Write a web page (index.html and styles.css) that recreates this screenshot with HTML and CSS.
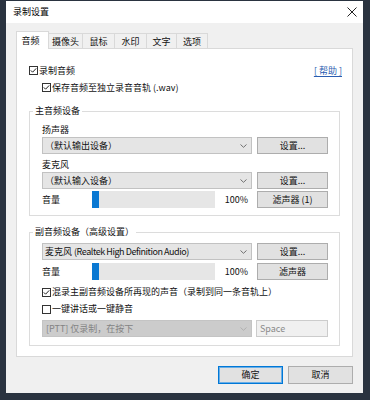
FILE: index.html
```html
<!DOCTYPE html>
<html lang="zh-CN">
<head>
<meta charset="utf-8">
<title>录制设置</title>
<link rel="stylesheet" href="styles.css">
</head>
<body>
<div class="window">
  <div class="titlebar">
    <span class="title">录制设置</span>
    <svg class="close" width="10" height="10" viewBox="0 0 10 10"><path d="M0.5 0.5 L9.5 9.5 M9.5 0.5 L0.5 9.5" stroke="#222" stroke-width="1" fill="none"/></svg>
  </div>
  <div class="body">
    <div class="tabs">
      <div class="tab active">音频</div>
      <div class="tab">摄像头</div>
      <div class="tab">鼠标</div>
      <div class="tab">水印</div>
      <div class="tab">文字</div>
      <div class="tab">选项</div>
    </div>
    <div class="panel">
      <div class="row row-top">
        <label class="check"><svg class="box" width="9" height="9" viewBox="0 0 9 9"><rect x="0.5" y="0.5" width="8" height="8" fill="#fff" stroke="#333"/><path d="M1.8 4.4 L3.6 6.2 L7.2 2.4" fill="none" stroke="#222" stroke-width="1"/></svg>录制音频</label>
        <span class="help">[ 帮助 ]</span>
      </div>
      <div class="row indent">
        <label class="check"><svg class="box" width="9" height="9" viewBox="0 0 9 9"><rect x="0.5" y="0.5" width="8" height="8" fill="#fff" stroke="#333"/><path d="M1.8 4.4 L3.6 6.2 L7.2 2.4" fill="none" stroke="#222" stroke-width="1"/></svg>保存音频至独立录音音轨 (.wav)</label>
      </div>

      <fieldset class="group g1">
        <legend>主音频设备</legend>
        <div class="gbody">
          <div class="lbl">扬声器</div>
          <div class="ctl-row">
            <div class="select"><span>（默认输出设备）</span><svg class="chev" width="7" height="4" viewBox="0 0 7 4"><path d="M0.5 0.5 L3.5 3.3 L6.5 0.5" stroke="#707070" fill="none"/></svg></div>
            <div class="btn">设置...</div>
          </div>
          <div class="lbl lbl2">麦克风</div>
          <div class="ctl-row">
            <div class="select"><span>（默认输入设备）</span><svg class="chev" width="7" height="4" viewBox="0 0 7 4"><path d="M0.5 0.5 L3.5 3.3 L6.5 0.5" stroke="#707070" fill="none"/></svg></div>
            <div class="btn">设置...</div>
          </div>
          <div class="vol">
            <span class="vlabel">音量</span>
            <div class="meter"><span class="thumb"></span></div>
            <span class="pct">100%</span>
            <div class="btn">滤声器 (1)</div>
          </div>
        </div>
      </fieldset>

      <fieldset class="group g2">
        <legend>副音频设备（高级设置）</legend>
        <div class="gbody">
          <div class="ctl-row">
            <div class="select"><span>麦克风 <span class="latin">(Realtek High Definition Audio)</span></span><svg class="chev" width="7" height="4" viewBox="0 0 7 4"><path d="M0.5 0.5 L3.5 3.3 L6.5 0.5" stroke="#707070" fill="none"/></svg></div>
            <div class="btn">设置...</div>
          </div>
          <div class="vol vol2">
            <span class="vlabel">音量</span>
            <div class="meter"><span class="thumb"></span></div>
            <span class="pct">100%</span>
            <div class="btn">滤声器</div>
          </div>
          <div class="crow crow1">
            <label class="check"><svg class="box" width="9" height="9" viewBox="0 0 9 9"><rect x="0.5" y="0.5" width="8" height="8" fill="#fff" stroke="#333"/><path d="M1.8 4.4 L3.6 6.2 L7.2 2.4" fill="none" stroke="#222" stroke-width="1"/></svg>混录主副音频设备所再现的声音（录制到同一条音轨上）</label>
          </div>
          <div class="crow crow2">
            <label class="check"><svg class="box" width="9" height="9" viewBox="0 0 9 9"><rect x="0.5" y="0.5" width="8" height="8" fill="#fff" stroke="#333"/></svg>一键讲话或一键静音</label>
          </div>
          <div class="ctl-row dis-row">
            <div class="select disabled"><span>[PTT] 仅录制，在按下</span><svg class="chev" width="7" height="4" viewBox="0 0 7 4"><path d="M0.5 0.5 L3.5 3.3 L6.5 0.5" stroke="#b0b0b0" fill="none"/></svg></div>
            <div class="keybox">Space</div>
          </div>
        </div>
      </fieldset>
    </div>
    <div class="actions">
      <div class="btn big default">确定</div>
      <div class="btn big">取消</div>
    </div>
  </div>
</div>
</body>
</html>
```

FILE: styles.css
```css
* { box-sizing: border-box; }

html, body {
  margin: 0;
  padding: 0;
}

body {
  width: 370px;
  height: 400px;
  overflow: hidden;
  background: #2a3340;
  padding: 1px 7px 0 6px;
  font-family: "Noto Sans CJK SC", "Noto Sans", sans-serif;
  font-size: 9px;
  color: #111;
}

.window {
  width: 357px;
  height: 392px;
  background: #f0f0f0;
  display: flex;
  flex-direction: column;
}

.titlebar {
  height: 22px;
  background: #fff;
  display: flex;
  align-items: center;
  justify-content: space-between;
  padding: 0 6px 0 7px;
}

.title {
  font-size: 9px;
  color: #000;
  line-height: 14px;
}

.close {
  display: block;
}

.body {
  padding: 9px 10px 9px 10px;
  display: flex;
  flex-direction: column;
}

/* tabs */
.tabs {
  height: 16px;
  display: flex;
  align-items: flex-end;
}

.tab {
  height: 15px;
  border: 1px solid #d9d9d9;
  border-bottom: none;
  background: #f0f0f0;
  display: flex;
  align-items: center;
  justify-content: center;
  margin-left: -1px;
  line-height: 12px;
  padding-top: 1px;
}

.tab:nth-child(1) { width: 33px; margin-left: 0; }
.tab:nth-child(2) { width: 35px; }
.tab:nth-child(3) { width: 33px; }
.tab:nth-child(4) { width: 33px; }
.tab:nth-child(5) { width: 31px; }
.tab:nth-child(6) { width: 32px; }

.tab.active {
  height: 18px;
  margin-bottom: -1px;
  background: #fff;
  position: relative;
  z-index: 1;
  padding-top: 0;
  padding-right: 4px;
}

/* panel */
.panel {
  height: 309px;
  background: #fff;
  border: 1px solid #d9d9d9;
  padding: 13px 12px 10px 12px;
  display: flex;
  flex-direction: column;
}

.row {
  height: 17px;
  display: flex;
  align-items: center;
}

.row-top {
  justify-content: space-between;
}

.indent {
  padding-left: 13px;
}

.check {
  display: flex;
  align-items: center;
  line-height: 14px;
  white-space: nowrap;
}

.box {
  display: block;
  margin-right: 1px;
  flex: none;
}

.help {
  color: #2a5db0;
  text-decoration: underline;
  text-underline-offset: 2px;
  margin-right: -2px;
  white-space: pre;
}

/* groups */
.group {
  margin: 0;
  padding: 0;
  border: 1px solid #dcdcdc;
  min-width: 0;
}

.group legend {
  margin-left: 3px;
  padding: 0 2px;
  line-height: 14px;
  height: 14px;
  color: #111;
}

.g1 { margin-top: 8px; }
.g2 { margin-top: 9px; }

.gbody {
  padding: 5px 11px 7px 12px;
  display: flex;
  flex-direction: column;
}

.g2 .gbody {
  padding-top: 4px;
  padding-bottom: 8px;
}

.lbl {
  height: 14px;
  line-height: 14px;
}

.lbl2 { margin-top: 4px; }

.ctl-row {
  height: 17px;
  display: flex;
  gap: 5px;
}

.select {
  width: 210px;
  height: 17px;
  background: #e5e5e5;
  border: 1px solid #c2c2c2;
  display: flex;
  align-items: center;
  justify-content: space-between;
  padding: 0 4px 0 2px;
  white-space: nowrap;
  overflow: hidden;
}

.latin {
  letter-spacing: -0.45px;
}

.chev {
  display: block;
  flex: none;
}

.select.disabled {
  background: #cccccc;
  border-color: #c4c4c4;
  color: #838383;
  padding-left: 3px;
}

.btn {
  width: 71px;
  height: 17px;
  background: #e1e1e1;
  border: 1px solid #adadad;
  display: flex;
  align-items: center;
  justify-content: center;
  white-space: nowrap;
  line-height: 12px;
}

.keybox {
  width: 72px;
  height: 17px;
  background: #f0f0f0;
  border: 1px solid #cccccc;
  color: #8a8a8a;
  display: flex;
  align-items: center;
  padding-left: 3px;
  margin-left: -1px;
}

.vol {
  height: 17px;
  margin-top: 2px;
  display: flex;
  align-items: center;
}

.vol2 { margin-top: 3px; }

.vlabel {
  width: 50px;
}

.meter {
  width: 123px;
  height: 17px;
  background: #e6e6e6;
  display: flex;
}

.thumb {
  width: 7px;
  height: 100%;
  background: #0a78d2;
}

.pct {
  width: 37px;
  text-align: right;
  padding-right: 4px;
  margin-right: 5px;
}

.crow {
  height: 16px;
  display: flex;
  align-items: center;
}

.crow1 { margin-top: 4px; }
.crow2 { margin-top: 1px; }
.dis-row { margin-top: 3px; }

/* bottom buttons */
.actions {
  padding-top: 9px;
  display: flex;
  justify-content: flex-end;
  gap: 5px;
}

.btn.big {
  width: 65px;
  height: 18px;
}

.btn.default {
  border: 1px solid #0078d7;
  box-shadow: inset 0 0 0 1px #6aaee6;
}
```
